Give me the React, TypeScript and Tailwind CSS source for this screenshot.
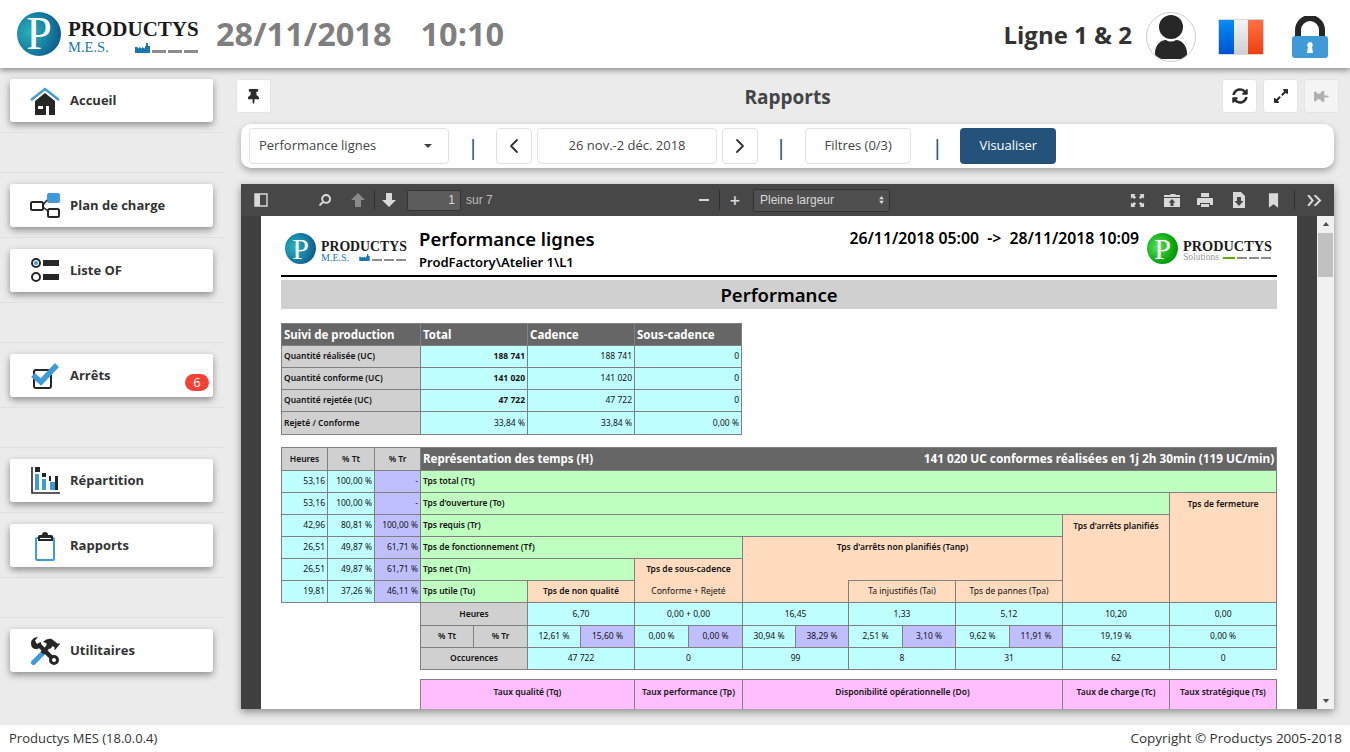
import type { ReactNode } from "react";
import { ChevronLeft, ChevronRight } from "lucide-react";
import { FaExpandAlt, FaSearch, FaSyncAlt, FaThumbtack } from "react-icons/fa";

const tones = {
  cyan: "bg-[#bfffff]",
  green: "bg-[#bfffbf]",
  peach: "bg-[#ffdcbf]",
  violet: "bg-[#bfbfff]",
  pink: "bg-[#ffbfff]",
  gray: "bg-[#d0d0d0]",
  dark: "bg-[#666666] text-white"
};

type CellProps = {
  tone: keyof typeof tones;
  children?: ReactNode;
  colSpan?: number;
  rowSpan?: number;
  className?: string;
};

function Cell({ tone, children, colSpan, rowSpan, className = "" }: CellProps) {
  return (
    <td colSpan={colSpan} rowSpan={rowSpan} className={`border border-[#808080] px-[2px] py-0 ${tones[tone]} ${className}`}>
      {children}
    </td>
  );
}

function Logo({ small = false, green = false }: { small?: boolean; green?: boolean }) {
  const ball = green
    ? "bg-[radial-gradient(circle_at_35%_45%,#5ee05e,#0aa50f_60%,#067a0a)]"
    : "bg-[radial-gradient(circle_at_30%_45%,#2bb0b8,#14799f_55%,#0b3f80)]";
  const nameSize = small ? (green ? "text-[14.3px]" : "text-[13.8px]") : "text-[21px]";
  return (
    <div className={`flex items-center font-['Liberation_Serif',serif] ${small ? "gap-[5px]" : "gap-[7px]"}`}>
      <div
        className={`flex shrink-0 items-center justify-center rounded-full text-white ${ball} ${
          small ? "h-[31px] w-[31px] text-[30px]" : "h-[44px] w-[44px] text-[46px]"
        }`}
      >
        <span className="leading-none">P</span>
      </div>
      <div className={small ? (green ? "mt-[5px] w-[88px]" : "mt-[5px] w-[85px]") : "mt-[6px] w-[130px]"}>
        <div className={`font-bold leading-none text-[#1a1a1a] ${nameSize}`}>PRODUCTYS</div>
        <div className={`flex items-center ${small ? "h-[9px]" : "h-[15px]"}`}>
          <span
            className={`leading-none ${green ? "text-[#999999]" : "text-[#1b78ad]"} ${
              small ? (green ? "text-[9.5px]" : "text-[10px]") : "text-[14.5px]"
            }`}
          >
            {green ? "Solutions" : "M.E.S."}
          </span>
          <div className="ml-auto flex items-end gap-[2px]">
            {green ? (
              <span className="h-[2px] w-[12px] bg-[#55b000]" />
            ) : (
              <svg viewBox="0 0 15 10" className={small ? "h-[7px] w-[11px]" : "h-[10px] w-[15px]"}>
                <path d="M0 10V4h2l2 1.5V4l3 1.5V4l3 1.5V3h1V0h2v3l2 0v7z" fill="#1b78ad" />
              </svg>
            )}
            <span className={`bg-[#8c8c8c] ${small ? "h-[2px] w-[10px]" : "h-[3px] w-[14px]"}`} />
            <span className={`bg-[#8c8c8c] ${small ? "h-[2px] w-[10px]" : "h-[3px] w-[14px]"}`} />
            <span className={`bg-[#8c8c8c] ${small ? "h-[2px] w-[10px]" : "h-[3px] w-[14px]"}`} />
          </div>
        </div>
      </div>
    </div>
  );
}

const navIcons: Record<string, ReactNode> = {
  Accueil: (
    <svg viewBox="0 0 30 28" className="h-[28px] w-[30px]">
      <path d="M1 13 15 2l14 11" fill="none" stroke="#3f9bd8" strokeWidth="2.4" />
      <path d="M5 14 15 6l10 8v14h-6v-9h-3v9H5zm3 5v3h5v-3z" fill="#262626" fillRule="evenodd" />
    </svg>
  ),
  "Plan de charge": (
    <svg viewBox="0 0 30 28" className="h-[28px] w-[30px]">
      <rect x="17" y="1" width="13" height="10" rx="2" fill="#3f9bd8" />
      <rect x="1" y="10" width="12" height="8" rx="1.5" fill="none" stroke="#262626" strokeWidth="2" />
      <rect x="18" y="17" width="11" height="8" rx="1.5" fill="none" stroke="#262626" strokeWidth="2" />
      <path d="m13 13 4-5M13 15l5 4" stroke="#262626" strokeWidth="1.5" />
    </svg>
  ),
  "Liste OF": (
    <svg viewBox="0 0 30 28" className="h-[28px] w-[30px]">
      <circle cx="6" cy="6" r="4" fill="#fff" stroke="#262626" strokeWidth="2" />
      <circle cx="6" cy="6" r="2" fill="#3f9bd8" />
      <circle cx="6" cy="20" r="4" fill="#fff" stroke="#262626" strokeWidth="2" />
      <rect x="13" y="3" width="16" height="6" fill="#262626" />
      <rect x="13" y="17" width="16" height="6" fill="#262626" />
    </svg>
  ),
  Arrêts: (
    <svg viewBox="0 0 30 28" className="h-[28px] w-[30px]">
      <rect x="4" y="8" width="17" height="18" rx="2" fill="#fff" stroke="#262626" strokeWidth="2" />
      <path d="m3 13 8 7L27 3" fill="none" stroke="#3f9bd8" strokeWidth="5.5" />
    </svg>
  ),
  Répartition: (
    <svg viewBox="0 0 30 28" className="h-[28px] w-[30px]">
      <path d="M2 0v26h28" fill="none" stroke="#262626" strokeWidth="1.6" />
      <rect x="5" y="7" width="4" height="16" fill="#3f9bd8" />
      <rect x="5" y="0" width="5" height="5" fill="#262626" />
      <rect x="12" y="12" width="4" height="11" fill="#3f9bd8" />
      <rect x="12" y="6" width="4" height="4" fill="#262626" />
      <rect x="20" y="15" width="5" height="8" fill="#3f9bd8" />
      <rect x="19" y="9" width="2" height="5" fill="#262626" />
      <rect x="25" y="9" width="3" height="14" fill="#262626" />
    </svg>
  ),
  Rapports: (
    <svg viewBox="0 0 30 30" className="h-[30px] w-[30px]">
      <rect x="5" y="6" width="20" height="24" rx="2" fill="#3f9bd8" />
      <rect x="7" y="8" width="16" height="20" fill="#fff" />
      <path d="M8 10V5.500a1.500 1.500 0 0 1 1.500-1.500H12a3 3 0 0 1 6 0h3.500A1.500 1.500 0 0 1 23 5.500V10z" fill="#262626" />
      <rect x="10" y="7" width="11" height="1" fill="#fff" />
    </svg>
  ),
  Utilitaires: (
    <svg viewBox="0 0 30 28" className="h-[28px] w-[30px]">
      <path d="m3.500 25.500 9-9" stroke="#3f9bd8" strokeWidth="5" strokeLinecap="round" />
      <path d="m12 16 8-8" stroke="#262626" strokeWidth="4" />
      <path d="M13 5c4-4 8-4 10-2l5 4 1-1 1 1-5 6-1-1 1-1-2-2-3 3-4-4 1-1-1-1z" fill="#262626" />
      <path d="m8 7 15 15" stroke="#262626" strokeWidth="4.500" />
      <path d="M1 6c0-3 3-6 7-6L5 3.500 7 7l4-2c1 4-2 8-6 7-3-.5-4-3-4-6z" fill="#262626" />
      <circle cx="24" cy="23" r="3.500" fill="#fff" stroke="#262626" strokeWidth="3" />
    </svg>
  )
};

function NavItem({ label, badge, last = false }: { label: string; badge?: number; last?: boolean }) {
  return (
    <div className={`px-[10px] pb-[10px] pt-[11px] ${last ? "" : "border-b border-[#e0e0e0]"}`}>
      <div className="relative flex h-[43px] w-[203px] items-center rounded-[3px] bg-white pl-[20px] shadow-[0_3px_7px_rgba(0,0,0,0.4)]">
        <span className="flex w-[40px] shrink-0 items-center">{navIcons[label]}</span>
        <span className="text-[13px] font-bold text-[#333333]">{label}</span>
        {badge !== undefined && (
          <span className="absolute bottom-[6px] right-[4px] flex h-[17px] w-[24px] items-center justify-center rounded-full bg-[#f44336] text-[13px] text-white">
            {badge}
          </span>
        )}
      </div>
    </div>
  );
}

function NavGroup({ children, first = false }: { children: ReactNode; first?: boolean }) {
  return <div className={first ? "" : "border-t border-[#e0e0e0]"}>{children}</div>;
}

function ToolButton({ children, disabled = false }: { children: ReactNode; disabled?: boolean }) {
  return (
    <div
      className={`flex h-[34px] w-[35px] items-center justify-center rounded-[3px] border border-[#e4e4e4] ${
        disabled ? "bg-[#f4f4f4] text-[#b0b0b0]" : "bg-white text-[#2b2b2b]"
      }`}
    >
      {children}
    </div>
  );
}

function BarBox({ className, children }: { className: string; children: ReactNode }) {
  return (
    <div className={`flex h-[36px] items-center justify-center rounded-[4px] border border-[#e2e2e2] text-[13px] text-[#444444] ${className}`}>
      {children}
    </div>
  );
}

function Pipe({ className }: { className: string }) {
  return <span className={`text-[22px] leading-none text-[#24527a] ${className}`}>|</span>;
}

function PdfToolbar() {
  return (
    <div className="flex h-[32px] shrink-0 items-center bg-[#474747] pl-[13px] pr-[12px] text-[#d9d9d9]">
      <svg viewBox="0 0 14 14" className="h-[14px] w-[14px]">
        <path d="M1 1h12v12H1z" fill="none" stroke="#d9d9d9" strokeWidth="1.4" />
        <rect x="1" y="1" width="5" height="12" fill="#d9d9d9" />
      </svg>
      <FaSearch className="ml-[51px] h-[12px] w-[12px] -scale-x-100" />
      <svg viewBox="0 0 14 14" className="ml-[20px] h-[14px] w-[14px]">
        <path d="M7 0 14 7H10v7H4V7H0z" fill="#8a8a8a" />
      </svg>
      <span className="ml-[9px] h-[20px] w-px bg-[#2f2f2f]" />
      <svg viewBox="0 0 14 14" className="ml-[7px] h-[14px] w-[14px]">
        <path d="M7 14 0 7h4V0h6v7h4z" fill="#d9d9d9" />
      </svg>
      <div className="ml-[11px] flex h-[21px] w-[54px] items-center justify-end rounded-[2px] border border-[#333333] bg-[#5c5c5c] pr-[5px] font-['Liberation_Sans',sans-serif] text-[12px]">
        1
      </div>
      <span className="ml-[5px] font-['Liberation_Sans',sans-serif] text-[12px] text-[#bdbdbd]">sur 7</span>
      <span className="ml-[206px] h-[2px] w-[10px] bg-[#d9d9d9]" />
      <span className="mx-[10px] h-[20px] w-px bg-[#2f2f2f]" />
      <span className="text-[18px] font-semibold leading-none">+</span>
      <div className="ml-[13px] flex h-[23px] w-[137px] items-center justify-between rounded-[2px] border border-[#333333] bg-[#4f4f4f] pl-[6px] pr-[5px] font-['Liberation_Sans',sans-serif] text-[12px]">
        Pleine largeur
        <svg viewBox="0 0 6 10" className="h-[8px] w-[5px]">
          <path d="M3 0 6 4H0zM3 10 0 6h6z" fill="#d9d9d9" />
        </svg>
      </div>
      <svg viewBox="0 0 16 16" className="ml-auto h-[15px] w-[15px]">
        <path d="M1 1h5L4.500 2.500 6.500 4.500 4.500 6.500 2.500 4.500 1 6zM15 1v5L13.500 4.500 11.500 6.500 9.500 4.500 11.500 2.500 10 1zM1 15v-5l1.500 1.500 2-2 2 2-2 2L6 15zM15 15h-5l1.500-1.500-2-2 2-2 2 2L15 10z" fill="#d9d9d9" />
      </svg>
      <svg viewBox="0 0 16 16" className="ml-[19px] h-[16px] w-[16px]">
        <path d="M0 3h6l1-1h4l1 1h4v2H0zM0 6h16v9H0z" fill="#d9d9d9" />
        <path d="M8 7 4.500 10.500h2V14h3v-3.500h2z" fill="#474747" />
      </svg>
      <svg viewBox="0 0 16 16" className="ml-[17px] h-[16px] w-[16px]">
        <path d="M4 1h8v4H4zM1 6h14a1 1 0 0 1 1 1v6h-3v-2H3v2H0V7a1 1 0 0 1 1-1zM4 12h8v3H4z" fill="#d9d9d9" />
      </svg>
      <svg viewBox="0 0 16 16" className="ml-[18px] h-[16px] w-[16px]">
        <path d="M2 0h8l4 4v12H2z" fill="#d9d9d9" />
        <path d="M6 5h4v4h2.500L8 14 3.500 9H6z" fill="#474747" />
      </svg>
      <svg viewBox="0 0 12 16" className="ml-[21px] h-[15px] w-[11px]">
        <path d="M1 0h10v16l-5-4-5 4z" fill="#d9d9d9" />
      </svg>
      <span className="ml-[15px] h-[20px] w-px bg-[#2f2f2f]" />
      <svg viewBox="0 0 16 12" className="ml-[12px] h-[11px] w-[15px]">
        <path d="m1 0 5 6-5 6M8 0l6 6-6 6" fill="none" stroke="#d9d9d9" strokeWidth="2.200" />
      </svg>
    </div>
  );
}

function Scrollbar() {
  return (
    <div className="flex w-[17px] shrink-0 flex-col items-center bg-[#f1f1f1]">
      <svg viewBox="0 0 8 5" className="mt-[6px] h-[4px] w-[8px]">
        <path d="M4 0 8 5H0z" fill="#505050" />
      </svg>
      <div className="mt-[7px] h-[44px] w-[15px] bg-[#c1c1c1]" />
      <svg viewBox="0 0 8 5" className="mb-[6px] mt-auto h-[4px] w-[8px]">
        <path d="M4 5 0 0h8z" fill="#505050" />
      </svg>
    </div>
  );
}

function ProductionTable() {
  const rows = [
    ["Quantité réalisée (UC)", "188 741", "188 741", "0"],
    ["Quantité conforme (UC)", "141 020", "141 020", "0"],
    ["Quantité rejetée (UC)", "47 722", "47 722", "0"],
    ["Rejeté / Conforme", "33,84 %", "33,84 %", "0,00 %"]
  ];
  return (
    <table className="mt-[14px] w-[460px] table-fixed border-collapse text-[8.5px] text-[#111111]">
      <colgroup>
        <col className="w-[139px]" />
        <col className="w-[107px]" />
        <col className="w-[107px]" />
        <col className="w-[107px]" />
      </colgroup>
      <tbody>
        <tr className="h-[22px] text-[11.5px] font-bold">
          <Cell tone="dark">Suivi de production</Cell>
          <Cell tone="dark">Total</Cell>
          <Cell tone="dark">Cadence</Cell>
          <Cell tone="dark">Sous-cadence</Cell>
        </tr>
        {rows.map((row, i) => (
          <tr key={row[0]} className={i < 3 ? "h-[22px]" : "h-[23px]"}>
            <Cell tone="gray" className="font-semibold">{row[0]}</Cell>
            <Cell tone="cyan" className={i < 3 ? "text-right font-bold" : "text-right"}>{row[1]}</Cell>
            <Cell tone="cyan" className="text-right">{row[2]}</Cell>
            <Cell tone="cyan" className="text-right">{row[3]}</Cell>
          </tr>
        ))}
      </tbody>
    </table>
  );
}

const columnWidths = [
  "w-[46px]", "w-[47px]", "w-[46px]", "w-[53px]", "w-[54px]", "w-[53px]", "w-[54px]", "w-[54px]", "w-[54px]",
  "w-[53px]", "w-[53px]", "w-[54px]", "w-[53px]", "w-[54px]", "w-[53px]", "w-[107px]", "w-[107px]"
];

function TimeRow({ values, children }: { values: string[]; children: ReactNode }) {
  return (
    <tr className="h-[22px]">
      <Cell tone="cyan" className="text-right">{values[0]}</Cell>
      <Cell tone="cyan" className="text-right">{values[1]}</Cell>
      <Cell tone="violet" className="text-right">{values[2]}</Cell>
      {children}
    </tr>
  );
}

function TimesTable() {
  const center = "text-center";
  const head = "text-center font-semibold";
  return (
    <table className="mt-[12px] w-[995px] table-fixed border-collapse text-[8.5px] text-[#111111]">
      <colgroup>
        {columnWidths.map((width, i) => (
          <col key={i} className={width} />
        ))}
      </colgroup>
      <tbody>
        <tr className="h-[23px]">
          <Cell tone="gray" className={head}>Heures</Cell>
          <Cell tone="gray" className={head}>% Tt</Cell>
          <Cell tone="gray" className={head}>% Tr</Cell>
          <Cell tone="dark" colSpan={14} className="font-bold">
            <div className="flex items-center justify-between">
              <span className="text-[11.5px]">Représentation des temps (H)</span>
              <span className="text-[11.8px]">141 020 UC conformes réalisées en 1j 2h 30min (119 UC/min)</span>
            </div>
          </Cell>
        </tr>
        <TimeRow values={["53,16", "100,00 %", "-"]}>
          <Cell tone="green" colSpan={14} className="font-semibold">Tps total (Tt)</Cell>
        </TimeRow>
        <TimeRow values={["53,16", "100,00 %", "-"]}>
          <Cell tone="green" colSpan={13} className="font-semibold">Tps d'ouverture (To)</Cell>
          <Cell tone="peach" rowSpan={5} className="pt-[5px] text-center align-top font-semibold">Tps de fermeture</Cell>
        </TimeRow>
        <TimeRow values={["42,96", "80,81 %", "100,00 %"]}>
          <Cell tone="green" colSpan={12} className="font-semibold">Tps requis (Tr)</Cell>
          <Cell tone="peach" rowSpan={4} className="pt-[5px] text-center align-top font-semibold">Tps d'arrêts planifiés</Cell>
        </TimeRow>
        <TimeRow values={["26,51", "49,87 %", "61,71 %"]}>
          <Cell tone="green" colSpan={6} className="font-semibold">Tps de fonctionnement (Tf)</Cell>
          <Cell tone="peach" colSpan={6} className="border-b-0 text-center font-semibold">Tps d'arrêts non planifiés (Tanp)</Cell>
        </TimeRow>
        <TimeRow values={["26,51", "49,87 %", "61,71 %"]}>
          <Cell tone="green" colSpan={4} className="font-semibold">Tps net (Tn)</Cell>
          <Cell tone="peach" colSpan={2} className="border-b-0 text-center font-semibold">Tps de sous-cadence</Cell>
          <Cell tone="peach" colSpan={2} rowSpan={2} className="border-r-0 border-t-0" />
          <Cell tone="peach" colSpan={4} className="border-l-0 border-t-0" />
        </TimeRow>
        <TimeRow values={["19,81", "37,26 %", "46,11 %"]}>
          <Cell tone="green" colSpan={2} className="font-semibold">Tps utile (Tu)</Cell>
          <Cell tone="peach" colSpan={2} className="text-center font-semibold">Tps de non qualité</Cell>
          <Cell tone="peach" colSpan={2} className="border-t-0 text-center">Conforme + Rejeté</Cell>
          <Cell tone="peach" colSpan={2} className={center}>Ta injustifiés (Tai)</Cell>
          <Cell tone="peach" colSpan={2} className={center}>Tps de pannes (Tpa)</Cell>
        </TimeRow>
        <tr className="h-[23px] text-center">
          <td colSpan={3} />
          <Cell tone="gray" colSpan={2} className="font-semibold">Heures</Cell>
          <Cell tone="cyan" colSpan={2}>6,70</Cell>
          <Cell tone="cyan" colSpan={2}>0,00 + 0,00</Cell>
          <Cell tone="cyan" colSpan={2}>16,45</Cell>
          <Cell tone="cyan" colSpan={2}>1,33</Cell>
          <Cell tone="cyan" colSpan={2}>5,12</Cell>
          <Cell tone="cyan">10,20</Cell>
          <Cell tone="cyan">0,00</Cell>
        </tr>
        <tr className="h-[22px] text-center">
          <td colSpan={3} />
          <Cell tone="gray" className="font-semibold">% Tt</Cell>
          <Cell tone="gray" className="font-semibold">% Tr</Cell>
          <Cell tone="cyan">12,61 %</Cell>
          <Cell tone="violet">15,60 %</Cell>
          <Cell tone="cyan">0,00 %</Cell>
          <Cell tone="violet">0,00 %</Cell>
          <Cell tone="cyan">30,94 %</Cell>
          <Cell tone="violet">38,29 %</Cell>
          <Cell tone="cyan">2,51 %</Cell>
          <Cell tone="violet">3,10 %</Cell>
          <Cell tone="cyan">9,62 %</Cell>
          <Cell tone="violet">11,91 %</Cell>
          <Cell tone="cyan">19,19 %</Cell>
          <Cell tone="cyan">0,00 %</Cell>
        </tr>
        <tr className="h-[22px] text-center">
          <td colSpan={3} />
          <Cell tone="gray" colSpan={2} className="font-semibold">Occurences</Cell>
          <Cell tone="cyan" colSpan={2}>47 722</Cell>
          <Cell tone="cyan" colSpan={2}>0</Cell>
          <Cell tone="cyan" colSpan={2}>99</Cell>
          <Cell tone="cyan" colSpan={2}>8</Cell>
          <Cell tone="cyan" colSpan={2}>31</Cell>
          <Cell tone="cyan">62</Cell>
          <Cell tone="cyan">0</Cell>
        </tr>
      </tbody>
    </table>
  );
}

function RatesTable() {
  return (
    <table className="ml-[139px] mt-[9px] w-[856px] table-fixed border-collapse text-[8.5px] font-semibold text-[#111111]">
      <colgroup>
        <col className="w-[214px]" />
        <col className="w-[108px]" />
        <col className="w-[320px]" />
        <col className="w-[107px]" />
        <col className="w-[107px]" />
      </colgroup>
      <tbody>
        <tr className="h-[34px] text-center">
          <Cell tone="pink" className="pb-[9px]">Taux qualité (Tq)</Cell>
          <Cell tone="pink" className="pb-[9px]">Taux performance (Tp)</Cell>
          <Cell tone="pink" className="pb-[9px]">Disponibilité opérationnelle (Do)</Cell>
          <Cell tone="pink" className="pb-[9px]">Taux de charge (Tc)</Cell>
          <Cell tone="pink" className="pb-[9px]">Taux stratégique (Ts)</Cell>
        </tr>
      </tbody>
    </table>
  );
}

function ReportPage() {
  return (
    <div className="w-[1036px] shrink-0 overflow-hidden bg-white px-[20px] font-['Noto_Sans',sans-serif]">
      <div className="flex h-[61px] items-start border-b-2 border-black pt-[12px] text-black">
        <div className="ml-[4px] w-[134px] pt-[5px]">
          <Logo small />
        </div>
        <div>
          <div className="text-[18.5px] font-semibold leading-[22px]">Performance lignes</div>
          <div className="mt-[3px] text-[13px] font-semibold leading-[18px]">ProdFactory\Atelier 1\L1</div>
        </div>
        <div className="ml-auto whitespace-pre text-[15.8px] font-semibold leading-[20px]">26/11/2018 05:00  -&gt;  28/11/2018 10:09</div>
        <div className="ml-[8px] mr-[6px] pt-[5px]">
          <Logo small green />
        </div>
      </div>
      <div className="mt-[3px] flex h-[29px] items-center justify-center bg-[#d0d0d0] text-[18.5px] font-semibold text-black">Performance</div>
      <ProductionTable />
      <TimesTable />
      <RatesTable />
    </div>
  );
}

export default function App() {
  return (
    <div className="flex h-[752px] flex-col overflow-hidden bg-[#ebebeb] font-['Open_Sans',sans-serif]">
      <header className="z-10 flex h-[68px] shrink-0 items-center bg-white pl-[17px] pr-[22px] shadow-[0_2px_6px_rgba(0,0,0,0.45)]">
        <Logo />
        <span className="ml-[18px] text-[32.5px] font-bold text-[#7f7f7f]">28/11/2018</span>
        <span className="ml-[29px] text-[32.5px] font-bold text-[#7f7f7f]">10:10</span>
        <div className="ml-auto flex items-center pt-[6px]">
          <span className="-mt-[4px] text-[24px] font-bold text-[#333333]">Ligne 1 &amp; 2</span>
          <div className="ml-[14px] flex h-[50px] w-[50px] items-center justify-center overflow-hidden rounded-full border border-[#cccccc]">
            <svg viewBox="0 0 32 44" className="h-[44px] w-[32px]">
              <circle cx="16" cy="12" r="12" fill="#262626" />
              <path d="M0 44v-6c0-7 5-13 11-13 2 1 3 1.500 5 1.500s3-.5 5-1.500c6 0 11 6 11 13v6z" fill="#262626" />
            </svg>
          </div>
          <div className="ml-[22px] flex h-[36px] w-[46px] border border-[#d8d8d8]">
            <span className="flex-1 bg-gradient-to-b from-[#0a8cf5] to-[#0052d4]" />
            <span className="flex-1 bg-gradient-to-b from-[#f5f5f5] to-[#cfcfcf]" />
            <span className="flex-1 bg-gradient-to-b from-[#ff7043] to-[#f03c0a]" />
          </div>
          <svg viewBox="0 0 36 42" className="ml-[28px] h-[42px] w-[36px]">
            <path d="M6 20v-6a12 12 0 0 1 24 0v6" fill="none" stroke="#262626" strokeWidth="6" />
            <rect y="20" width="36" height="22" rx="3" fill="#3f9bd8" />
            <path d="M18 26a3 3 0 0 1 2 5l1 6h-6l1-6a3 3 0 0 1 2-5z" fill="#fff" />
          </svg>
        </div>
      </header>

      <div className="flex min-h-0 flex-1">
        <nav className="flex w-[224px] shrink-0 flex-col gap-[39px]">
          <NavGroup first>
            <NavItem label="Accueil" />
          </NavGroup>
          <NavGroup>
            <NavItem label="Plan de charge" />
            <NavItem label="Liste OF" />
          </NavGroup>
          <NavGroup>
            <NavItem label="Arrêts" badge={6} />
          </NavGroup>
          <NavGroup>
            <NavItem label="Répartition" />
            <NavItem label="Rapports" />
          </NavGroup>
          <NavGroup>
            <NavItem label="Utilitaires" last />
          </NavGroup>
        </nav>

        <main className="flex min-w-0 flex-1 flex-col pb-[16px] pl-[12px] pr-[11px] pt-[11px]">
          <div className="flex h-[34px] shrink-0 items-center justify-between">
            <ToolButton><FaThumbtack className="h-[15px] w-[15px]" /></ToolButton>
            <span className="ml-[82px] pt-[2px] text-[19px] font-bold text-[#444444]">Rapports</span>
            <div className="flex gap-[6px]">
              <ToolButton><FaSyncAlt className="h-[16px] w-[16px]" /></ToolButton>
              <ToolButton><FaExpandAlt className="h-[16px] w-[16px]" /></ToolButton>
              <ToolButton disabled><FaThumbtack className="h-[15px] w-[15px] -rotate-90" /></ToolButton>
            </div>
          </div>

          <div className="mx-[5px] mt-[11px] flex h-[44px] shrink-0 items-center rounded-[10px] bg-white pl-[8px] shadow-[0_3px_7px_rgba(0,0,0,0.3)]">
            <BarBox className="w-[200px] !justify-between pl-[9px] pr-[16px]">
              Performance lignes
              <span className="h-0 w-0 border-x-[4px] border-t-[4px] border-x-transparent border-t-[#444444]" />
            </BarBox>
            <Pipe className="ml-[18px]" />
            <BarBox className="ml-[17px] w-[36px]"><ChevronLeft className="h-[24px] w-[24px] text-[#333333]" strokeWidth={1.8} /></BarBox>
            <BarBox className="ml-[5px] w-[180px]">26 nov.-2 déc. 2018</BarBox>
            <BarBox className="ml-[5px] w-[36px]"><ChevronRight className="h-[24px] w-[24px] text-[#333333]" strokeWidth={1.8} /></BarBox>
            <Pipe className="ml-[17px]" />
            <BarBox className="ml-[18px] w-[106px]">Filtres (0/3)</BarBox>
            <Pipe className="ml-[20px]" />
            <div className="ml-[17px] flex h-[36px] w-[96px] items-center justify-center rounded-[4px] bg-[#24527a] text-[13px] text-white">Visualiser</div>
          </div>

          <div className="mx-[5px] mt-[16px] flex min-h-0 flex-1 flex-col shadow-[0_3px_8px_rgba(0,0,0,0.4)]">
            <PdfToolbar />
            <div className="flex min-h-0 flex-1 overflow-hidden bg-[#404040]">
              <div className="w-[20px] shrink-0" />
              <ReportPage />
              <div className="flex-1" />
              <Scrollbar />
            </div>
          </div>
        </main>
      </div>

      <footer className="flex h-[27px] shrink-0 items-center justify-between bg-white pl-[9px] pr-[8px] text-[#333333]">
        <span className="text-[13px]">Productys MES (18.0.0.4)</span>
        <span className="text-[13.5px]">Copyright © Productys 2005-2018</span>
      </footer>
    </div>
  );
}
